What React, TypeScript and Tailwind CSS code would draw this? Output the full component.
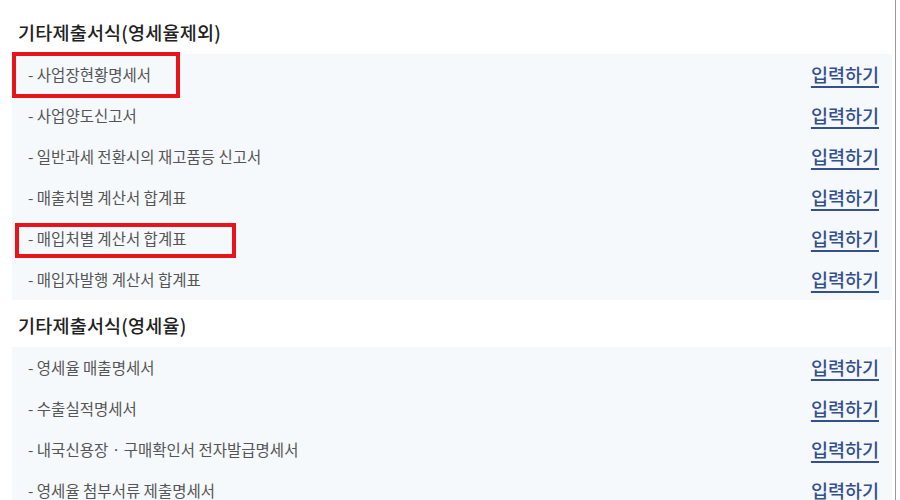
const groups = [
  {
    title: "기타제출서식(영세율제외)",
    items: [
      "사업장현황명세서",
      "사업양도신고서",
      "일반과세 전환시의 재고품등 신고서",
      "매출처별 계산서 합계표",
      "매입처별 계산서 합계표",
      "매입자발행 계산서 합계표",
    ],
  },
  {
    title: "기타제출서식(영세율)",
    items: [
      "영세율 매출명세서",
      "수출실적명세서",
      "내국신용장 · 구매확인서 전자발급명세서",
      "영세율 첨부서류 제출명세서",
    ],
  },
];

export default function App() {
  return (
    <div
      className="relative w-[900px] h-[500px] overflow-hidden bg-white"
      style={{ fontFamily: '"Noto Sans CJK KR", "Noto Sans", sans-serif' }}
    >
      <div className="flex flex-col pr-[3px] border-r border-[#9a9a9a] w-[896px] h-full">
        {groups.map((g, gi) => (
          <div key={gi} className="flex flex-col">
            <h2
              className={`${gi === 0 ? "h-[54px] pt-[19px]" : "h-[47px] pt-[12px]"} pl-[18px] text-[18.5px] leading-[26px] font-medium text-[#222] tracking-[0.2px]`}
            >
              {g.title}
            </h2>
            <ul className="ml-[12px] bg-[#f5f9fc] pl-4 pr-[13px]">
              {g.items.map((item) => (
                <li key={item} className="h-[41px] flex items-center justify-between">
                  <span className="text-[15.5px] text-[#555]">- {item}</span>
                  <a className="text-[18.5px] font-medium text-[#34508f] underline underline-offset-[4px] decoration-[1.5px]">
                    입력하기
                  </a>
                </li>
              ))}
            </ul>
          </div>
        ))}
      </div>

      {/* highlight boxes */}
      <div className="absolute left-[12px] top-[52px] w-[168px] h-[46px] border-[4px] border-[#e8141b]" />
      <div className="absolute left-[15px] top-[223px] w-[221px] h-[35px] border-[4px] border-[#e8141b]" />
    </div>
  );
}
